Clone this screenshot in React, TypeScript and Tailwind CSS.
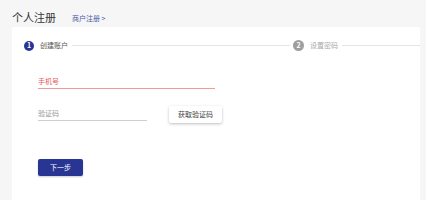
export default function App() {
  return (
    <div
      className="flex min-h-[200px] w-[426px] flex-col bg-[#f6f6f6] leading-none"
      style={{ fontFamily: '"Noto Sans CJK SC", "Noto Sans", sans-serif' }}
    >
      <div className="flex h-[27px] items-end pb-[3px] pl-[12px]">
        <span className="text-[11px] leading-[14px] text-[#333]">个人注册</span>
        <span className="mb-[1px] ml-[16px] text-[7px] leading-[10px] text-[#4a56a6]">商户注册 &gt;</span>
      </div>

      <div className="ml-[12px] mr-[6px] flex flex-1 flex-col bg-white">
        {/* stepper */}
        <div className="flex items-center pl-[12px] pt-[13px]">
          <div className="flex h-[10px] w-[10px] items-center justify-center rounded-full bg-[#283593] text-[7px] font-bold leading-none text-white">
            1
          </div>
          <span className="ml-[6px] text-[7px] leading-none text-[#555]">创建账户</span>
          <div className="ml-[4px] h-px flex-1 bg-[#e4e4e4]" />
          <div className="ml-[3px] flex h-[11px] w-[11px] items-center justify-center rounded-full bg-[#9e9e9e] text-[7px] font-bold leading-none text-white">
            2
          </div>
          <span className="ml-[6px] text-[7px] leading-none text-[#aaa]">设置密码</span>
          <div className="ml-[4px] h-px w-[78px] bg-[#e4e4e4]" />
        </div>

        {/* phone */}
        <div className="ml-[26px] mt-[26px] w-[177px] border-b border-[#f29a9a] pb-[2px] text-[7px] leading-[9px] text-[#e55a5a]">
          手机号
        </div>

        {/* code */}
        <div className="ml-[26px] mt-[17px] flex items-start">
          <div className="mt-[3px] w-[109px] border-b border-[#cfcfcf] pb-[2px] text-[7px] leading-[9px] text-[#999]">
            验证码
          </div>
          <button
            type="button"
            className="ml-[22px] flex h-[17px] w-[53px] items-center justify-center rounded-[2px] bg-white text-[7px] leading-none text-[#444] shadow-[0_1px_3px_rgba(0,0,0,0.25)]"
          >
            获取验证码
          </button>
        </div>

        {/* next */}
        <button
          type="button"
          className="ml-[26px] mt-[36px] flex h-[17px] w-[45px] items-center justify-center rounded-[2px] bg-[#283593] text-[7px] leading-none text-white shadow-[0_1px_2px_rgba(0,0,0,0.2)]"
        >
          下一步
        </button>
      </div>
    </div>
  )
}
